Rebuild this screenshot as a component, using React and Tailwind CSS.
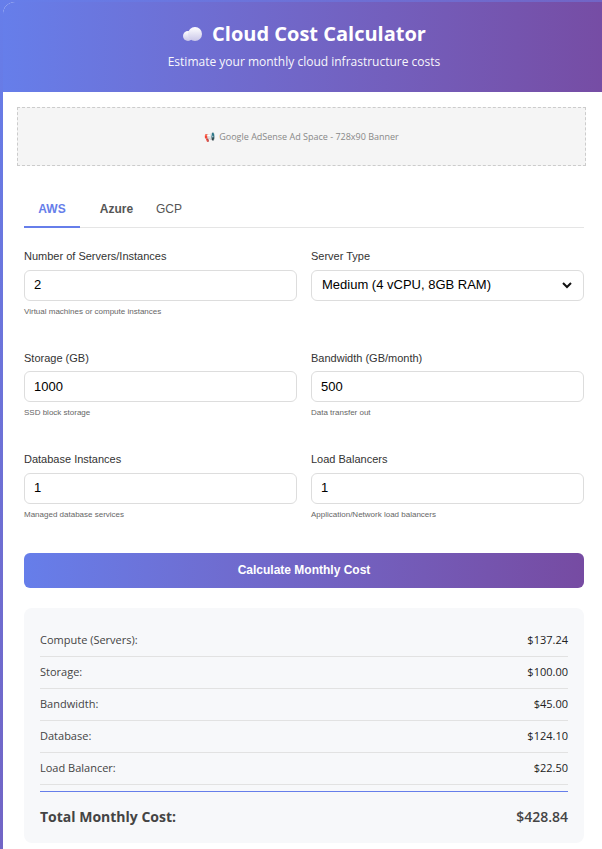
import React from "react";

const font = { fontFamily: '"Open Sans", "Noto Sans", sans-serif' };

function Field({ label, value, help, select }) {
  return (
    <div className="flex flex-col">
      <label className="text-[11px] text-[#333] mb-[5px]" style={{ fontFamily: '"Liberation Sans", Arial, sans-serif' }}>{label}</label>
      {select ? (
        <div className="h-[31px] border border-[#ddd] rounded-md flex items-center justify-between px-[10px] text-[13px] text-black bg-white" style={{ fontFamily: '"Liberation Sans", Arial, sans-serif' }}>
          <span>{value}</span>
          <svg width="12" height="12" viewBox="0 0 12 12"><path d="M2 4l4 4 4-4" fill="none" stroke="#111" strokeWidth="2" /></svg>
        </div>
      ) : (
        <div className="h-[31px] border border-[#ddd] rounded-md flex items-center px-[9px] text-[13px] text-black bg-white" style={{ fontFamily: '"Liberation Sans", Arial, sans-serif' }}>{value}</div>
      )}
      <span className="text-[8px] text-[#666] mt-[5px]" style={{ fontFamily: '"Liberation Sans", Arial, sans-serif' }}>{help}</span>
    </div>
  );
}

const rows = [
  ["Compute (Servers):", "$137.24"],
  ["Storage:", "$100.00"],
  ["Bandwidth:", "$45.00"],
  ["Database:", "$124.10"],
  ["Load Balancer:", "$22.50"],
];

export default function App() {
  return (
    <div className="min-h-[849px] bg-gradient-to-br from-[#667eea] to-[#764ba2] pl-[3px] pt-[2px] overflow-hidden" style={font}>
      <div className="w-[620px] bg-white rounded-tl-[12px] overflow-hidden">
        <div className="h-[90px] bg-gradient-to-r from-[#667eea] to-[#764ba2] flex flex-col items-center justify-center text-white pr-[18px]">
          <div className="flex items-center gap-2 text-[20px] font-bold leading-none">
            <svg width="22" height="14" viewBox="0 0 22 14">
              <defs>
                <linearGradient id="c" x1="0" y1="0" x2="0" y2="1">
                  <stop offset="0" stopColor="#ffffff" />
                  <stop offset="1" stopColor="#c9c6e8" />
                </linearGradient>
              </defs>
              <circle cx="6" cy="9" r="5" fill="url(#c)" />
              <circle cx="13" cy="7" r="7" fill="url(#c)" />
            </svg>
            <span>Cloud Cost Calculator</span>
          </div>
          <div className="text-[12px] mt-[9px] opacity-95">Estimate your monthly cloud infrastructure costs</div>
        </div>
        <div className="pl-[14px] w-[600px] pt-[15px] pb-[8px]">
          <div className="h-[59px] border border-dashed border-[#ccc] bg-[#f5f5f5] flex items-center justify-center text-[9px] text-[#888] gap-1 w-[569px]">
            <span className="text-[#d04070]">📢</span>Google AdSense Ad Space - 728x90 Banner
          </div>
          <div className="ml-[7px] w-[560px] mt-[34px]">
            <div className="flex border-b border-[#e5e5e5] text-[12px]" style={{ fontFamily: '"Liberation Sans", Arial, sans-serif' }}>
              <div className="w-[56px] text-center pb-[8px] border-b-2 border-[#667eea] text-[#667eea] font-bold -mb-px">AWS</div>
              <div className="w-[73px] text-center pb-[8px] text-[#555] font-bold">Azure</div>
              <div className="w-[32px] text-center pb-[8px] text-[#555]">GCP</div>
            </div>
            <div className="grid grid-cols-2 gap-x-[14px] gap-y-[32px] mt-[20px]">
              <Field label="Number of Servers/Instances" value="2" help="Virtual machines or compute instances" />
              <Field label="Server Type" value="Medium (4 vCPU, 8GB RAM)" help="" select />
              <Field label="Storage (GB)" value="1000" help="SSD block storage" />
              <Field label="Bandwidth (GB/month)" value="500" help="Data transfer out" />
              <Field label="Database Instances" value="1" help="Managed database services" />
              <Field label="Load Balancers" value="1" help="Application/Network load balancers" />
            </div>
            <div className="mt-[32px] h-[35px] rounded-md bg-gradient-to-r from-[#667eea] to-[#764ba2] flex items-center justify-center text-white text-[12px] font-bold" style={{ fontFamily: '"Liberation Sans", Arial, sans-serif' }}>
              Calculate Monthly Cost
            </div>
            <div className="mt-[20px] bg-[#f7f8fa] rounded-[8px] px-[16px] pt-[17px] pb-[16px]">
              {rows.map(([k, v]) => (
                <div key={k} className="flex justify-between items-center h-[32px] border-b border-[#e2e2e2] text-[11px] text-[#444]">
                  <span>{k}</span>
                  <span className="text-[#222]">{v}</span>
                </div>
              ))}
              <div className="border-t border-[#667eea] mt-[6px] pt-[14px] flex justify-between text-[14px] font-bold text-[#444]">
                <span>Total Monthly Cost:</span>
                <span className="font-semibold">$428.84</span>
              </div>
            </div>
          </div>
        </div>
      </div>
    </div>
  );
}
